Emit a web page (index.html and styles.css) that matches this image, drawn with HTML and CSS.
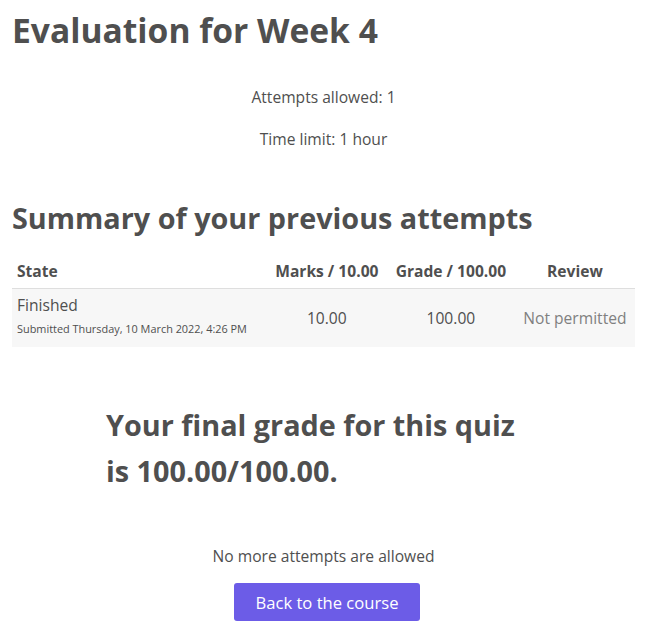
FILE: index.html
```html
<!DOCTYPE html>
<html>
<head>
<meta charset="utf-8">
<link rel="stylesheet" href="styles.css">
</head>
<body>
<div class="page">
  <h2 class="title">Evaluation for Week 4</h2>
  <div class="info">
    <p>Attempts allowed: 1</p>
    <p>Time limit: 1 hour</p>
  </div>
  <h3 class="summary">Summary of your previous attempts</h3>
  <table class="attempts">
    <thead>
      <tr>
        <th class="c-state">State</th>
        <th class="c-marks">Marks / 10.00</th>
        <th class="c-grade">Grade / 100.00</th>
        <th class="c-review">Review</th>
      </tr>
    </thead>
    <tbody>
      <tr>
        <td class="c-state">Finished<span class="sub">Submitted Thursday, 10 March 2022, 4:26 PM</span></td>
        <td class="c-marks">10.00</td>
        <td class="c-grade">100.00</td>
        <td class="c-review muted">Not permitted</td>
      </tr>
    </tbody>
  </table>
  <div class="final">
    <h3>Your final grade for this quiz is 100.00/100.00.</h3>
  </div>
  <div class="actions">
    <p>No more attempts are allowed</p>
    <button class="btn">Back to the course</button>
  </div>
</div>
</body>
</html>
```
FILE: styles.css
```css
html, body {
  margin: 0;
  padding: 0;
  background: #fff;
}
body {
  font-family: "Open Sans", "Liberation Sans", sans-serif;
  color: #4f4f4f;
  font-size: 15.6px;
}
.page {
  padding: 0 10px 0 12px;
}
.title {
  font-size: 33.6px;
  font-weight: 700;
  margin: 0;
  padding-top: 8px;
  line-height: 44px;
}
.info {
  text-align: center;
  margin-top: 34px;
}
.info p {
  margin: 0 0 19px;
  line-height: 23px;
}
.summary {
  font-size: 28.8px;
  font-weight: 700;
  margin: 47px 0 17px;
  line-height: 40px;
}
.attempts {
  width: 100%;
  border-collapse: collapse;
}
.attempts th {
  font-weight: 700;
  font-size: 15.6px;
  padding: 5px 5px 6px;
  border-bottom: 1px solid #dedede;
  line-height: 22px;
}
.attempts td {
  background: #f7f7f7;
  padding: 5px;
  font-size: 15.6px;
  line-height: 22px;
  vertical-align: middle;
}
.attempts .c-state { text-align: left; }
.attempts .c-marks, .attempts .c-grade, .attempts .c-review { text-align: center; }
.attempts .sub {
  display: block;
  font-size: 10.9px;
  line-height: 26px;
}
.muted { color: #808080; }
.final {
  width: 435px;
  margin: 55px auto 0;
}
.final h3 {
  font-size: 28.8px;
  font-weight: 700;
  line-height: 46px;
  margin: 0;
}
.actions {
  text-align: center;
  margin-top: 51px;
}
.actions p {
  margin: 0 0 16px;
  line-height: 22px;
}
.btn {
  font-family: inherit;
  font-size: 16.6px;
  color: #fff;
  background: #6c5ce7;
  border: none;
  border-radius: 3px;
  padding: 0 22px;
  height: 38px;
  margin-left: 7px;
}
```
